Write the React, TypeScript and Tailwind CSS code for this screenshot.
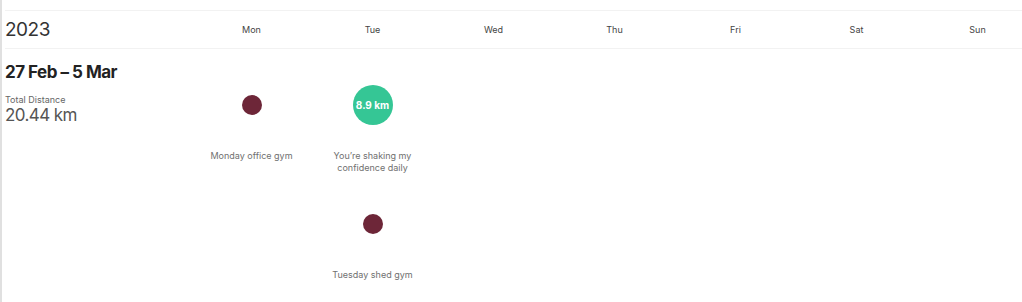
import React from "react";

const days = ["Mon", "Tue", "Wed", "Thu", "Fri", "Sat", "Sun"];

type Act = { size: "sm" | "lg"; label?: string; title: string[] };

const acts: Record<string, Act[]> = {
  Mon: [{ size: "sm", title: ["Monday office gym"] }],
  Tue: [
    { size: "lg", label: "8.9 km", title: ["You’re shaking my", "confidence daily"] },
    { size: "sm", title: ["Tuesday shed gym"] },
  ],
};

function Activity({ a }: { a: Act }) {
  return (
    <div className="flex h-[119px] flex-col items-center">
      <div className="flex h-[60px] items-center justify-center">
        {a.size === "lg" ? (
          <div className="flex h-[40px] w-[40px] items-center justify-center rounded-full bg-[#35c695] text-[10px] font-bold text-white">
            {a.label}
          </div>
        ) : (
          <div className="h-[20px] w-[20px] rounded-full bg-[#6d2638]" />
        )}
      </div>
      <div className="mt-[15px] text-center text-[9px] leading-[12px] text-[#707070]">
        {a.title.map((t) => (
          <div key={t}>{t}</div>
        ))}
      </div>
    </div>
  );
}

export default function App() {
  return (
    <div
      className="h-[302px] w-[1022px] overflow-hidden border-l-2 border-[#e0e0e0] bg-white"
      style={{ fontFamily: "Inter, 'Liberation Sans', sans-serif" }}
    >
      <div className="w-[1100px] pl-[3px] pt-[10px]">
        <div className="flex h-[39px] items-center border-y border-[#f2f2f2]">
          <div className="w-[186px] text-[19px] leading-none tracking-[-0.5px] text-[#333]">2023</div>
          {days.map((d) => (
            <div key={d} className="w-[121px] text-center text-[9px] text-[#444]">
              {d}
            </div>
          ))}
        </div>
        <div className="flex">
          <div className="w-[186px] pt-[12px]">
            <div className="text-[17px] font-bold leading-[22px] tracking-[-0.5px] text-[#222]">27 Feb – 5 Mar</div>
            <div className="mt-[11px] text-[9px] leading-[11px] text-[#666]">Total Distance</div>
            <div className="text-[17px] leading-[21px] tracking-[-0.6px] text-[#555]">20.44 km</div>
          </div>
          {days.map((d) => (
            <div key={d} className="flex w-[121px] flex-col pt-[26px]">
              {(acts[d] || []).map((a, i) => (
                <Activity key={i} a={a} />
              ))}
            </div>
          ))}
        </div>
      </div>
    </div>
  );
}
